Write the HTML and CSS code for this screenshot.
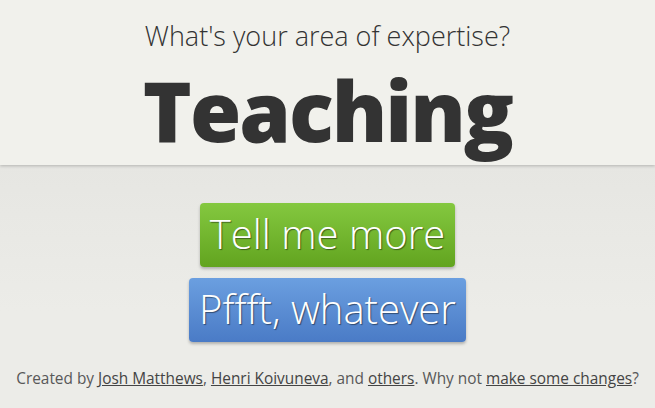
FILE: index.html
```html
<!DOCTYPE html>
<html>
<head>
<meta charset="utf-8">
<link rel="stylesheet" href="styles.css">
</head>
<body>
<header class="top">
  <h2 class="question">What's your area of expertise?</h2>
  <h1 class="answer">Teaching</h1>
</header>
<main class="bottom">
  <div class="buttons">
    <a class="btn btn-green" href="#">Tell me more</a>
    <a class="btn btn-blue" href="#">Pffft, whatever</a>
  </div>
  <p class="credits">Created by <a href="#">Josh Matthews</a>, <a href="#">Henri Koivuneva</a>, and <a href="#">others</a>. Why not <a href="#">make some changes</a>?</p>
</main>
</body>
</html>
```
FILE: styles.css
```css
html, body {
  margin: 0;
  padding: 0;
  height: 100%;
}
body {
  font-family: "Open Sans", "DejaVu Sans", sans-serif;
  background: #e8e8e4;
  color: #333;
  overflow: hidden;
}
.top {
  position: relative;
  z-index: 1;
  height: 165px;
  background: #f1f1ec;
  box-shadow: 0 1px 3px rgba(0,0,0,0.22);
  text-align: center;
  padding-top: 18px;
  box-sizing: border-box;
}
.question {
  margin: 0;
  font-weight: 300;
  font-size: 27px;
  line-height: 36px;
  color: #333;
}
.answer {
  margin: 8px 0 0;
  font-weight: 800;
  font-size: 83px;
  line-height: 96px;
  color: #333;
  letter-spacing: -2px;
}
.bottom {
  background: linear-gradient(#e6e6e2, #ecece8 60%);
  height: 243px;
  display: flex;
  flex-direction: column;
  align-items: center;
  padding-top: 38px;
  box-sizing: border-box;
}
.buttons {
  display: flex;
  flex-direction: column;
  align-items: center;
  gap: 11px;
}
.btn {
  display: block;
  height: 64px;
  line-height: 62px;
  padding: 0 10px;
  font-size: 40px;
  font-weight: 300;
  color: #fff;
  text-decoration: none;
  border-radius: 4px;
  text-shadow: 1px 1px 1px rgba(0,0,0,0.45);
  box-shadow: 0 2px 3px rgba(0,0,0,0.25);
  box-sizing: border-box;
}
.btn-green {
  background: linear-gradient(#84c83f, #62a41f);
}
.btn-blue {
  background: linear-gradient(#6b9fe0, #4a7bc6);
}
.credits {
  margin: 26px 0 0;
  font-size: 15.4px;
  font-weight: 400;
  color: #585858;
}
.credits a {
  color: #444;
  text-decoration: underline;
}
```
